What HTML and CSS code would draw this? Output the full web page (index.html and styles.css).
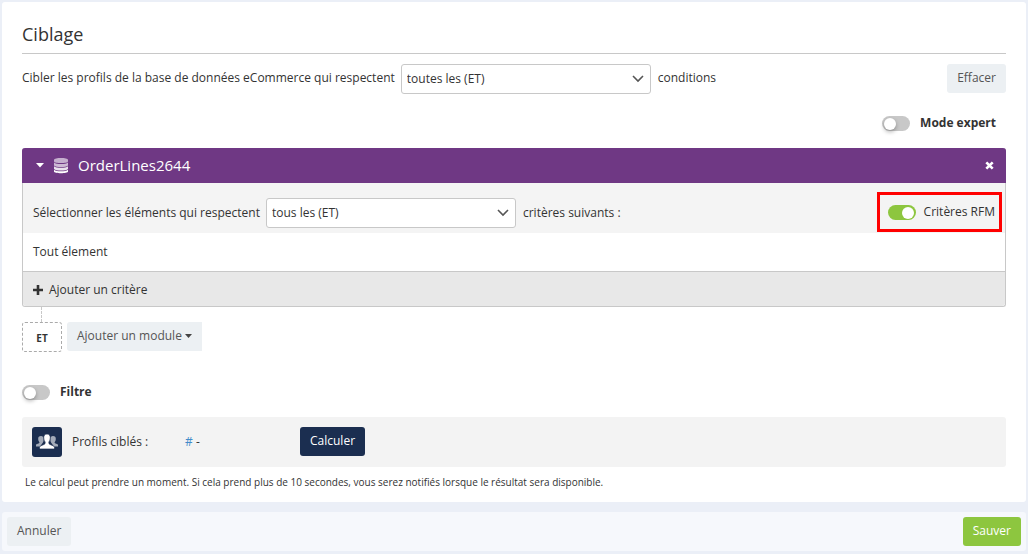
FILE: index.html
```html
<!DOCTYPE html>
<html lang="fr">
<head>
<meta charset="utf-8">
<meta name="viewport" content="width=device-width, initial-scale=1">
<title>Ciblage</title>
<link rel="stylesheet" href="styles.css">
</head>
<body>
<main class="panel">
  <h1 class="title">Ciblage</h1>

  <div class="target-row">
    <label for="profile-match">Cibler les profils de la base de données eCommerce qui respectent</label>
    <select class="select" id="profile-match"><option>toutes les (ET)</option><option>au moins une (OU)</option></select>
    <span class="after-select">conditions</span>
    <button class="btn push-right" type="button">Effacer</button>
  </div>

  <div class="expert-row">
    <label class="toggle-label strong"><input class="toggle" type="checkbox" role="switch">Mode expert</label>
  </div>

  <section class="module">
    <header class="module-head">
      <button class="icon-btn" type="button" aria-label="Replier">
        <svg width="8" height="5" viewBox="0 0 8 5"><path d="M0 0h8L4 4.5z" fill="#fff"/></svg>
      </button>
      <svg class="db-icon" width="16" height="17" viewBox="0 0 16 17" fill="#fff">
        <path opacity=".6" d="M1 3C1 .4 15 .4 15 3v1.500C15 6.500 1 6.500 1 4.500z"/>
        <path opacity=".65" d="M1 5.500c2 2 12 2 14 0v3c-2 2-12 2-14 0z"/>
        <path opacity=".85" d="M1 9.200c2 2 12 2 14 0V12c-2 2-12 2-14 0z"/>
        <path d="M1 12.700c2 2 12 2 14 0v1.800c0 2.300-14 2.300-14 0z"/>
      </svg>
      <h2 class="module-title">OrderLines2644</h2>
      <button class="icon-btn push-right" type="button" aria-label="Supprimer">
        <svg width="9" height="9" viewBox="0 0 9 9"><path d="M1.300 1.300l6.400 6.400M7.700 1.300L1.300 7.700" stroke="#fff" stroke-width="2.600"/></svg>
      </button>
    </header>
    <div class="module-filter">
      <label for="item-match">Sélectionner les éléments qui respectent</label>
      <select class="select" id="item-match"><option>tous les (ET)</option><option>au moins un (OU)</option></select>
      <span class="after-select">critères suivants :</span>
      <label class="toggle-label highlight push-right"><input class="toggle" type="checkbox" role="switch" checked>Critères RFM</label>
    </div>
    <p class="module-empty">Tout élement</p>
    <button class="add-criterion" type="button">
      <svg width="10" height="10" viewBox="0 0 10 10"><path d="M5 0v10M0 5h10" stroke="#333" stroke-width="2.600"/></svg>
      Ajouter un critère
    </button>
  </section>

  <div class="connector"></div>
  <div class="join-row">
    <span class="join">ET</span>
    <button class="btn add-module" type="button">Ajouter un module
      <svg width="7" height="4" viewBox="0 0 7 4"><path d="M0 0h7L3.500 4z" fill="#444"/></svg>
    </button>
  </div>

  <div class="filter-row">
    <label class="toggle-label strong"><input class="toggle" type="checkbox" role="switch">Filtre</label>
  </div>

  <div class="count-box">
    <span class="people">
      <svg width="24" height="18" viewBox="0 0 24 18" fill="#fff">
        <path opacity=".6" d="M6 3c2 0 2.700 1.400 2.700 3.500S8 9.200 7.600 10L5 13.500H1V12c0-1.300 3.500-1.400 3.500-2.500C3.600 8.500 3.200 7 3.200 5.800 3.200 4 4 3 6 3zM18 3c-2 0-2.700 1.400-2.700 3.500s.7 2.700 1.100 3.500l2.600 3.500h4V12c0-1.300-3.500-1.400-3.500-2.500.9-1 1.300-2.500 1.300-3.700C20.800 4 20 3 18 3z"/>
        <path d="M12 1c2.300 0 3.300 1.500 3.300 3.800 0 1.900-.6 3.200-1.400 4.200v1.500c0 1.200 5.600 2 5.600 3.700V16h-15v-1.800c0-1.700 5.600-2.500 5.600-3.700V9C9.300 8 8.700 6.700 8.700 4.800 8.700 2.500 9.700 1 12 1z" stroke="#1b2e50" stroke-width=".7"/>
      </svg>
    </span>
    <span class="count-label">Profils ciblés :</span>
    <span class="count-value"><span class="hash">#</span> -</span>
    <button class="btn btn-navy" type="button">Calculer</button>
  </div>
  <p class="note">Le calcul peut prendre un moment. Si cela prend plus de 10 secondes, vous serez notifiés lorsque le résultat sera disponible.</p>
</main>

<footer class="actions">
  <button class="btn" type="button">Annuler</button>
  <button class="btn btn-green push-right" type="button">Sauver</button>
</footer>
</body>
</html>
```
FILE: styles.css
```css
* { box-sizing: border-box; }

body {
  margin: 0;
  padding: 2px;
  background: #ebeff7;
  color: #333;
  font: 12px/18px "Open Sans", sans-serif;
}

svg { display: block; flex: none; }
h1, h2, p { margin: 0; }
button, select { font: inherit; color: inherit; }
button { cursor: pointer; }

.push-right { margin-left: auto; }

.panel {
  padding: 20px 20px 6px;
  background: #fff;
  border-radius: 3px;
}

.title {
  padding-bottom: 7px;
  border-bottom: 1px solid #c8c8c8;
  font-size: 18px;
  font-weight: 400;
  line-height: 24px;
}

.target-row {
  display: flex;
  align-items: flex-start;
  margin-top: 10px;
  line-height: 28px;
}

.select {
  width: 250px;
  height: 30px;
  margin-left: 6px;
  padding: 0 30px 0 5px;
  border: 1px solid #c8c8c8;
  border-radius: 3px;
  appearance: none;
  background: #fff url("data:image/svg+xml,%3Csvg xmlns='http://www.w3.org/2000/svg' width='12' height='8' viewBox='0 0 12 8'%3E%3Cpath d='M1 1l5 5 5-5' fill='none' stroke='%23555' stroke-width='1.600'/%3E%3C/svg%3E") no-repeat right 6px center;
}

.after-select { margin-left: 7px; }

.btn {
  height: 29px;
  padding: 0 10px 2px;
  border: 0;
  border-radius: 3px;
  background: #ecf0f3;
  color: #555;
  line-height: 18px;
}

.btn-navy { background: #1b2e50; color: #fff; }
.btn-green { background: #8dc63f; color: #fff; }

.expert-row {
  display: flex;
  justify-content: flex-end;
  padding: 20px 10px 16px;
}

.toggle-label {
  display: flex;
  align-items: center;
  gap: 10px;
}

.strong { font-weight: 700; }

.toggle {
  width: 28px;
  height: 15px;
  margin: 0;
  padding: 2px;
  border-radius: 8px;
  appearance: none;
  background: #c8c8c8;
}

.toggle::before {
  content: "";
  display: block;
  width: 12px;
  height: 12px;
  border-radius: 50%;
  background: #fff;
  box-shadow: 0 2px 4px rgba(0, 0, 0, .3);
}

.toggle:checked { background: #8dc63f; }
.toggle:checked::before { margin-left: auto; box-shadow: none; }

.module {
  border: 1px solid #c8c8c8;
  border-top: 0;
  border-radius: 3px;
}

.module-head {
  display: flex;
  align-items: center;
  height: 35px;
  margin: 0 -1px;
  padding: 0 8px 1px 10px;
  border-radius: 3px 3px 0 0;
  background: #6f3884;
  color: #fff;
}

.icon-btn {
  padding: 0 4px;
  border: 0;
  background: none;
}

.db-icon { margin-left: 5px; }

.module-title {
  margin-left: 9px;
  font-size: 15px;
  font-weight: 400;
}

.module-filter {
  display: flex;
  align-items: center;
  height: 50px;
  padding: 9px 3px 0 10px;
  background: #f4f4f4;
}

.highlight {
  align-self: flex-start;
  height: 40px;
  padding: 0 4px 0 8px;
  border: 3px solid #f00;
  gap: 8px;
}

.module-empty { padding: 10px 10px; }

.add-criterion {
  display: flex;
  align-items: center;
  gap: 6px;
  width: 100%;
  height: 35px;
  padding: 1px 10px 0;
  border: 0;
  border-top: 1px solid #c8c8c8;
  border-radius: 0 0 3px 3px;
  background: #e8e8e8;
}

.connector {
  height: 15px;
  margin-left: 19px;
  border-left: 1px dashed #c8c8c8;
}

.join-row {
  display: flex;
  gap: 5px;
}

.join {
  width: 40px;
  height: 30px;
  border: 1px dashed #aaa;
  border-radius: 3px;
  font-size: 10px;
  font-weight: 700;
  line-height: 30px;
  text-align: center;
}

.add-module {
  display: flex;
  align-items: center;
  gap: 3px;
  border-radius: 3px 0 0 3px;
}

.filter-row { padding: 31px 0 16px; }

.count-box {
  display: flex;
  align-items: flex-start;
  padding: 10px;
  border-radius: 3px;
  background: #f3f3f3;
  line-height: 30px;
}

.people {
  display: grid;
  place-items: center;
  width: 30px;
  height: 30px;
  border-radius: 3px;
  background: #1b2e50;
}

.count-label { width: 123px; padding-left: 10px; }
.count-value { width: 115px; }
.hash { color: #428bca; }

.note {
  padding: 6px 3px 5px;
  font-size: 10px;
}

.actions {
  display: flex;
  margin-top: 10px;
  padding: 5px;
  border-radius: 3px;
  background: #f6f8fc;
}
```
